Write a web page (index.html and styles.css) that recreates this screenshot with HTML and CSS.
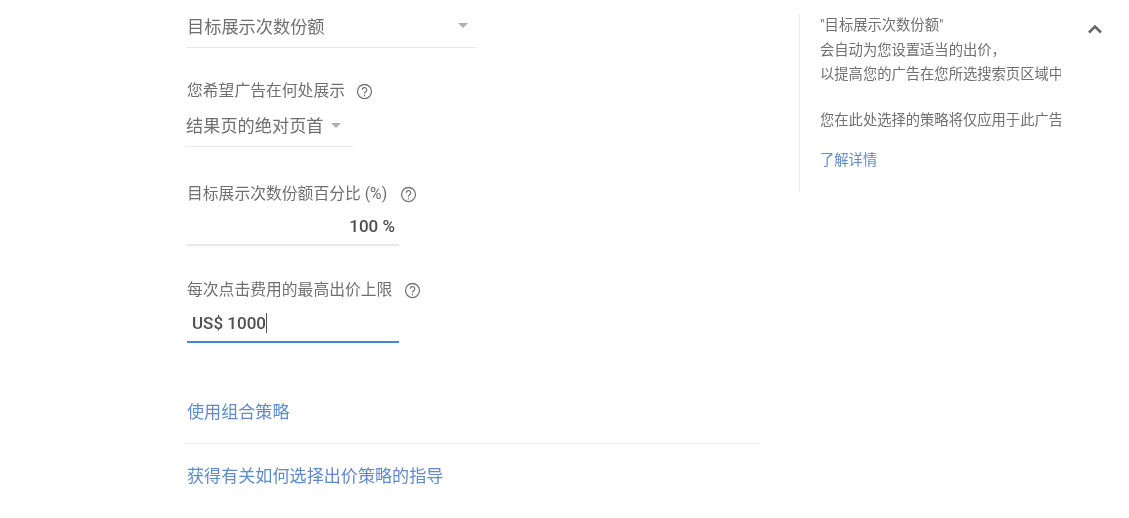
FILE: index.html
```html
<!DOCTYPE html>
<html>

<head>
    <title>出价</title>
    <meta charset="utf-8">
    <meta name="viewport" content="width=device-width, initial-scale=1">
    <link rel="stylesheet" href="styles.css">
</head>

<body>
<div class="page">
    <div class="form">
        <div class="select select-main">
            <span>目标展示次数份额</span>
            <span class="arrow"></span>
        </div>

        <div class="label label-where">您希望广告在何处展示
            <svg class="help" viewBox="0 0 16 16"><circle cx="8" cy="8" r="6.6"/><path d="M5.9 6.4a2.1 2.1 0 1 1 3.3 1.7c-.8.6-1.2.9-1.2 1.9"/><path d="M8 11.2v1.3"/></svg>
        </div>
        <div class="select select-where">
            <span>结果页的绝对页首</span>
            <span class="arrow"></span>
        </div>

        <div class="label label-percent">目标展示次数份额百分比 (%)
            <svg class="help" viewBox="0 0 16 16"><circle cx="8" cy="8" r="6.6"/><path d="M5.9 6.4a2.1 2.1 0 1 1 3.3 1.7c-.8.6-1.2.9-1.2 1.9"/><path d="M8 11.2v1.3"/></svg>
        </div>
        <div class="input input-percent">100 %</div>

        <div class="label label-cpc">每次点击费用的最高出价上限
            <svg class="help" viewBox="0 0 16 16"><circle cx="8" cy="8" r="6.6"/><path d="M5.9 6.4a2.1 2.1 0 1 1 3.3 1.7c-.8.6-1.2.9-1.2 1.9"/><path d="M8 11.2v1.3"/></svg>
        </div>
        <div class="input input-cpc"><span class="typed">US$ 1000</span></div>

        <a class="link link-combo">使用组合策略</a>
        <div class="divider"></div>
        <a class="link link-guide">获得有关如何选择出价策略的指导</a>
    </div>

    <div class="side">
        <div class="side-text">
            <div>"目标展示次数份额"</div>
            <div>会自动为您设置适当的出价，</div>
            <div>以提高您的广告在您所选搜索页区域中的展示次数份额</div>
            <div class="side-gap">您在此处选择的策略将仅应用于此广告系列</div>
            <a class="side-link">了解详情</a>
        </div>
        <svg class="collapse" viewBox="0 0 16 10"><path d="M2 8.5l6-6 6 6"/></svg>
    </div>
</div>
</body>

</html>
```

FILE: styles.css
```css
body {
    margin: 0;
    background-color: #FFFFFF;
    font-family: Roboto, "Noto Sans CJK SC", sans-serif;
    color: #707070;
    overflow: hidden;
}

.page {
    display: flex;
    align-items: flex-start;
    height: 518px;
    padding-left: 186px;
    box-sizing: border-box;
    filter: blur(0.5px);
}

.form {
    width: 574px;
    flex: none;
}

.select {
    display: flex;
    align-items: center;
    justify-content: space-between;
    font-size: 17.2px;
    border-bottom: 1px solid #e8e8e8;
}

.select-main {
    width: 290px;
    height: 48px;
    padding: 3px 8px 0 1px;
    box-sizing: border-box;
}

.select-where {
    width: 167px;
    height: 46px;
    padding-top: 2px;
    justify-content: flex-start;
    gap: 7px;
    box-sizing: border-box;
}

.arrow {
    width: 0;
    height: 0;
    margin-top: 1px;
    border-left: 5px solid transparent;
    border-right: 5px solid transparent;
    border-top: 5px solid #b0b0b0;
}

.label {
    display: flex;
    align-items: center;
    gap: 11px;
    font-size: 15.8px;
    line-height: 20px;
    padding-left: 1px;
}

.label-where {
    margin-top: 33px;
}

.label-percent {
    margin-top: 37px;
    gap: 13px;
}

.label-cpc {
    margin-top: 34px;
    gap: 12px;
}

.help {
    width: 17px;
    height: 17px;
    fill: none;
    stroke: #757575;
    stroke-width: 1.2;
}

.input {
    width: 212px;
    margin-left: 1px;
    font-size: 17px;
    font-weight: 500;
    box-sizing: border-box;
    color: #4f4f4f;
}

.input-percent {
    height: 42px;
    text-align: right;
    padding: 12px 4px 0 0;
    border-bottom: 2px solid #e8e8e8;
}

.input-cpc {
    height: 43px;
    padding: 13px 0 0 5px;
    border-bottom: 2px solid #4a86d8;
}

.typed {
    border-right: 1px solid #555555;
}

.link {
    display: block;
    font-size: 17.1px;
    line-height: 24px;
    color: #5f8acb;
    padding-left: 1px;
}

.link-combo {
    margin-top: 57px;
}

.divider {
    height: 1px;
    margin-top: 19px;
    background-color: #ececec;
}

.link-guide {
    margin-top: 20px;
}

.side {
    display: flex;
    align-items: flex-start;
    margin: 14px 0 0 39px;
    height: 178px;
    border-left: 1px solid #eeeeee;
    padding-left: 20px;
}

.side-text {
    width: 241px;
    overflow: hidden;
    white-space: nowrap;
    font-size: 14.3px;
    line-height: 24.5px;
    margin-top: -1px;
}

.side-gap {
    margin-top: 21px;
}

.side-link {
    display: block;
    margin-top: 16px;
    color: #5f8acb;
}

.collapse {
    width: 16px;
    height: 10px;
    margin: 10px 0 0 26px;
    fill: none;
    stroke: #666666;
    stroke-width: 2.6;
}
```
